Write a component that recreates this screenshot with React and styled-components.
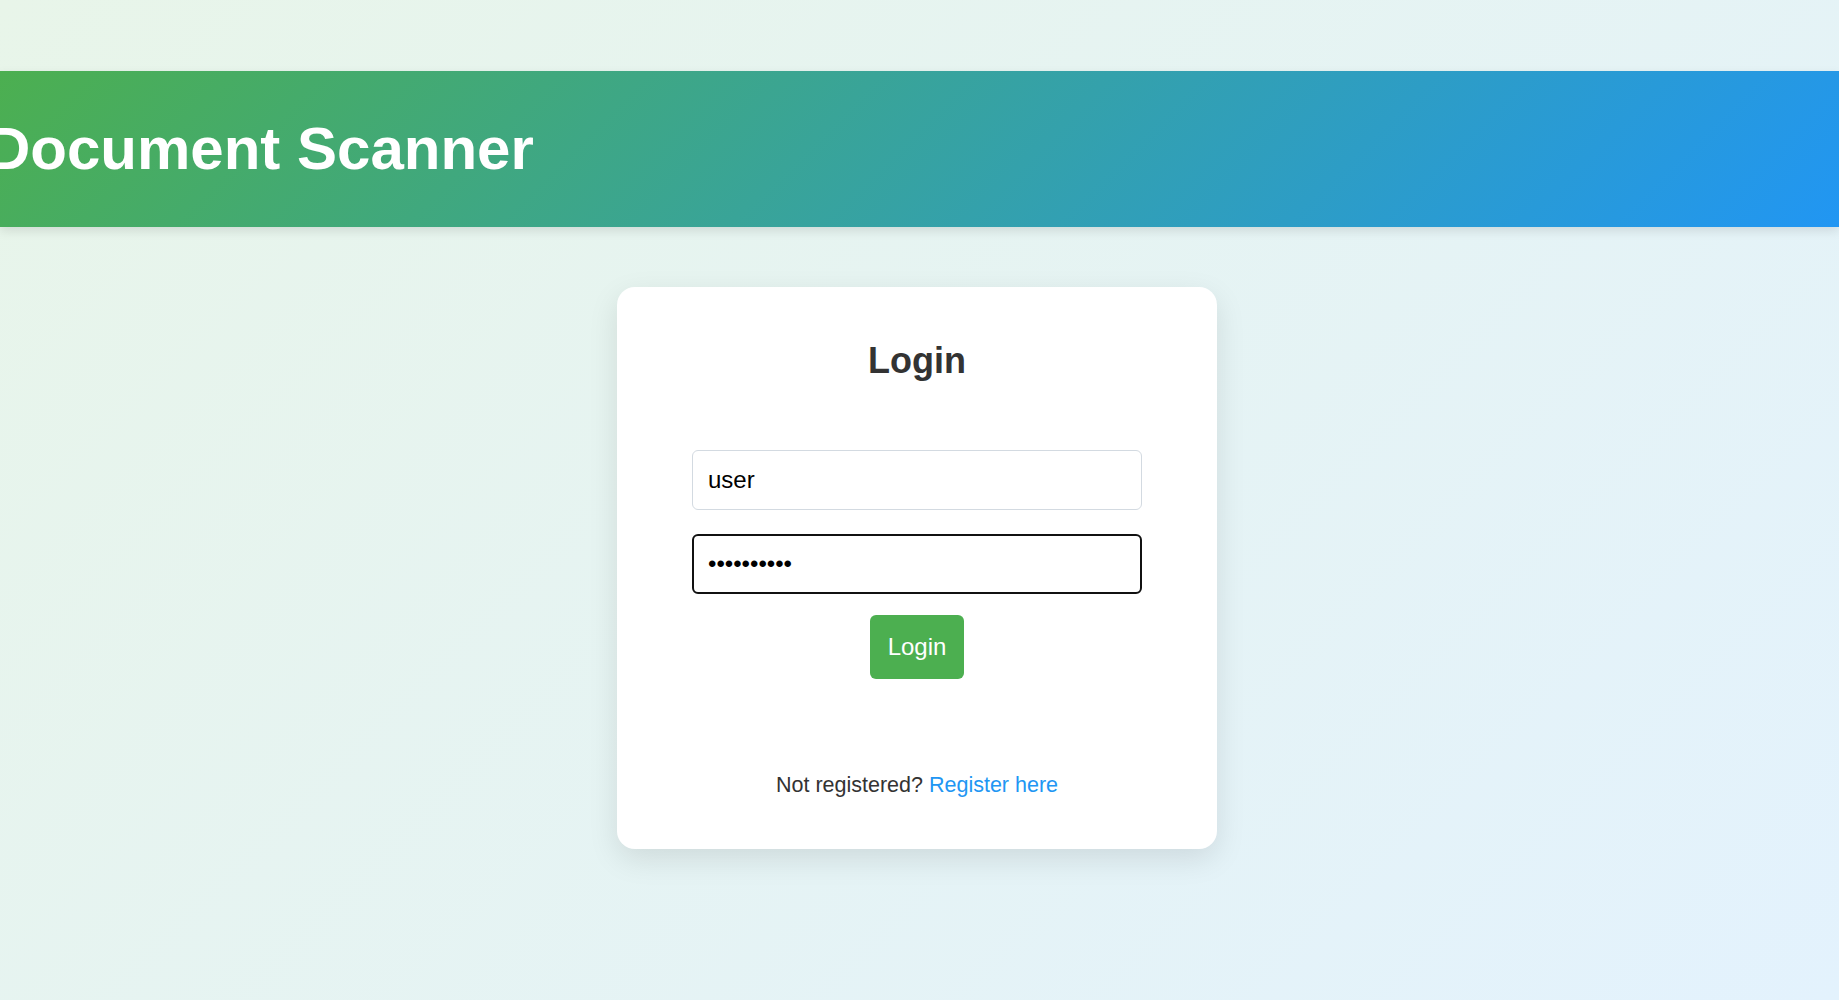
import styled, { createGlobalStyle } from "styled-components";

const GlobalStyle = createGlobalStyle`
  html, body {
    margin: 0;
    padding: 0;
  }
  body {
    min-height: 100vh;
    background: linear-gradient(135deg, #e8f5e9, #e3f2fd);
    font-family: "Liberation Sans", Arial, sans-serif;
    color: #333;
  }
`;

const Page = styled.div`
  min-height: 100vh;
  padding-top: 71px;
  box-sizing: border-box;
  overflow: hidden;
`;

const Header = styled.header`
  height: 156px;
  display: flex;
  align-items: center;
  background: linear-gradient(135deg, #4caf50, #2196f3);
  box-shadow: 0 4px 10px rgba(0, 0, 0, 0.1);
`;

const Title = styled.h1`
  margin: -2px 0 0 -13px;
  font-size: 60px;
  font-weight: 700;
  color: #ffffff;
  white-space: nowrap;
`;

const Main = styled.main`
  padding: 60px 5px 0 0;
`;

const Card = styled.div`
  width: 600px;
  box-sizing: border-box;
  margin: 0 auto;
  padding: 53px 75px 51px;
  background: #ffffff;
  border-radius: 18px;
  box-shadow: 0 10px 30px rgba(0, 0, 0, 0.1);
  text-align: center;
`;

const CardTitle = styled.h2`
  margin: 0 0 68px;
  font-size: 36px;
  font-weight: 700;
  color: #333;
`;

const Form = styled.form`
  display: flex;
  flex-direction: column;
  align-items: center;
`;

const Input = styled.input`
  width: 100%;
  height: 60px;
  box-sizing: border-box;
  margin-bottom: ${(props) => props.gap};
  padding: 0 ${(props) => (props.focused ? "14px" : "15px")};
  border: ${(props) => (props.focused ? "2px solid #111" : "1px solid #d3dae1")};
  border-radius: 6px;
  background: #fff;
  font-family: "Liberation Sans", Arial, sans-serif;
  font-size: 24px;
  color: #000;
  outline: none;
`;

const Button = styled.button`
  padding: 0 18px;
  height: 64px;
  border: none;
  border-radius: 6px;
  background: #4caf50;
  color: #fff;
  font-family: "Liberation Sans", Arial, sans-serif;
  font-size: 24px;
  cursor: pointer;
`;

const Footer = styled.p`
  margin: 94px 0 0;
  font-size: 21.5px;
  color: #333;
`;

const Link = styled.a`
  color: #2196f3;
  text-decoration: none;
`;

const App = () => {
  return (
    <Page>
      <GlobalStyle />
      <Header>
        <Title>Document Scanner</Title>
      </Header>
      <Main>
        <Card>
          <CardTitle>Login</CardTitle>
          <Form onSubmit={(e) => e.preventDefault()}>
            <Input type="text" defaultValue="user" gap="24px" />
            <Input type="password" defaultValue="password12" gap="21px" focused />
            <Button type="submit">Login</Button>
          </Form>
          <Footer>
            Not registered? <Link href="#">Register here</Link>
          </Footer>
        </Card>
      </Main>
    </Page>
  );
};

export default App;
